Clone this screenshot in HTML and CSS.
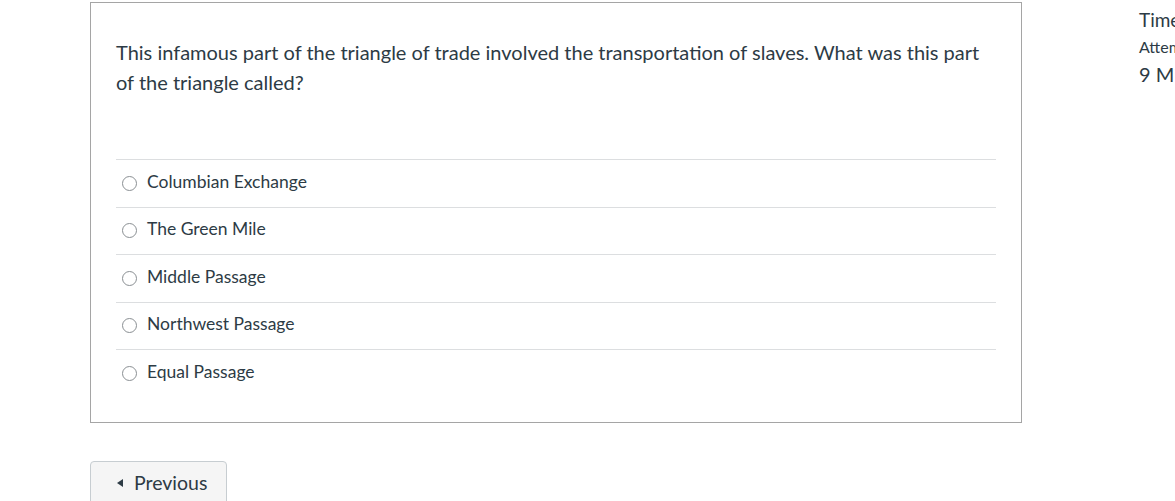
FILE: index.html
```html
<!DOCTYPE html>
<html>
<head>
<meta charset="utf-8">
<link rel="stylesheet" href="styles.css">
</head>
<body>
<div class="page">
  <main class="main">
    <div class="question">
      <div class="question-text">This infamous part of the triangle of trade involved the transportation of slaves. What was this part of the triangle called?</div>
      <div class="answers">
        <label class="answer"><span class="radio"></span><span class="label">Columbian Exchange</span></label>
        <label class="answer"><span class="radio"></span><span class="label">The Green Mile</span></label>
        <label class="answer"><span class="radio"></span><span class="label">Middle Passage</span></label>
        <label class="answer"><span class="radio"></span><span class="label">Northwest Passage</span></label>
        <label class="answer"><span class="radio"></span><span class="label">Equal Passage</span></label>
      </div>
    </div>
    <div class="nav">
      <button class="btn"><span class="caret"></span>Previous</button>
    </div>
  </main>
  <aside class="side">
    <div class="side-title">Time Running:</div>
    <div class="side-small">Attempt due: Feb 22 at 11:59pm</div>
    <div class="side-big">9 Minutes, 18 Seconds</div>
  </aside>
</div>
</body>
</html>
```
FILE: styles.css
```css
html, body {
  margin: 0;
  padding: 0;
  background: #fff;
  overflow: hidden;
}
body {
  font-family: Lato, "Liberation Sans", sans-serif;
  color: #2d3b45;
  width: 1175px;
  height: 501px;
}
.page {
  display: flex;
  padding-left: 90px;
  padding-top: 2px;
  width: 1085px;
  overflow: hidden;
}
.main {
  width: 932px;
  flex: none;
}
.question {
  border: 1px solid #a5a5a5;
  padding: 34px 25px 24px 25px;
  box-sizing: border-box;
  height: 421px;
}
.question-text {
  font-size: 20px;
  line-height: 30px;
  margin-bottom: 62px;
}
.answers {
  display: flex;
  flex-direction: column;
}
.answer {
  display: flex;
  align-items: center;
  border-top: 1px solid #dcdee0;
  box-sizing: border-box;
  height: 47.5px;
  padding-left: 6px;
  padding-bottom: 4px;
  font-size: 17.5px;
}
.radio {
  width: 13px;
  height: 13px;
  border: 1px solid #8a8f93;
  border-radius: 50%;
  margin-right: 10px;
  flex: none;
  position: relative;
  top: 2px;
}
.nav {
  margin-top: 38px;
}
.btn {
  font-family: Lato, "Liberation Sans", sans-serif;
  font-size: 19.5px;
  color: #2d3b45;
  background: #f5f5f5;
  border: 1px solid #c7cdd1;
  border-radius: 4px;
  height: 44px;
  width: 137px;
  padding: 0 0 2px 26px;
  display: flex;
  align-items: center;
  text-align: left;
}
.caret {
  width: 0;
  height: 0;
  border-top: 4px solid transparent;
  border-bottom: 4px solid transparent;
  border-right: 6px solid #2d3b45;
  margin-right: 11px;
  position: relative;
  top: 1px;
}
.side {
  flex: none;
  margin-left: 117px;
  padding-top: 7px;
  white-space: nowrap;
}
.side-title {
  font-size: 19px;
  line-height: 22px;
}
.side-small {
  font-size: 16px;
  margin-top: 6px;
  line-height: 20px;
}
.side-big {
  font-size: 20px;
  margin-top: 5px;
  line-height: 24px;
}
```
